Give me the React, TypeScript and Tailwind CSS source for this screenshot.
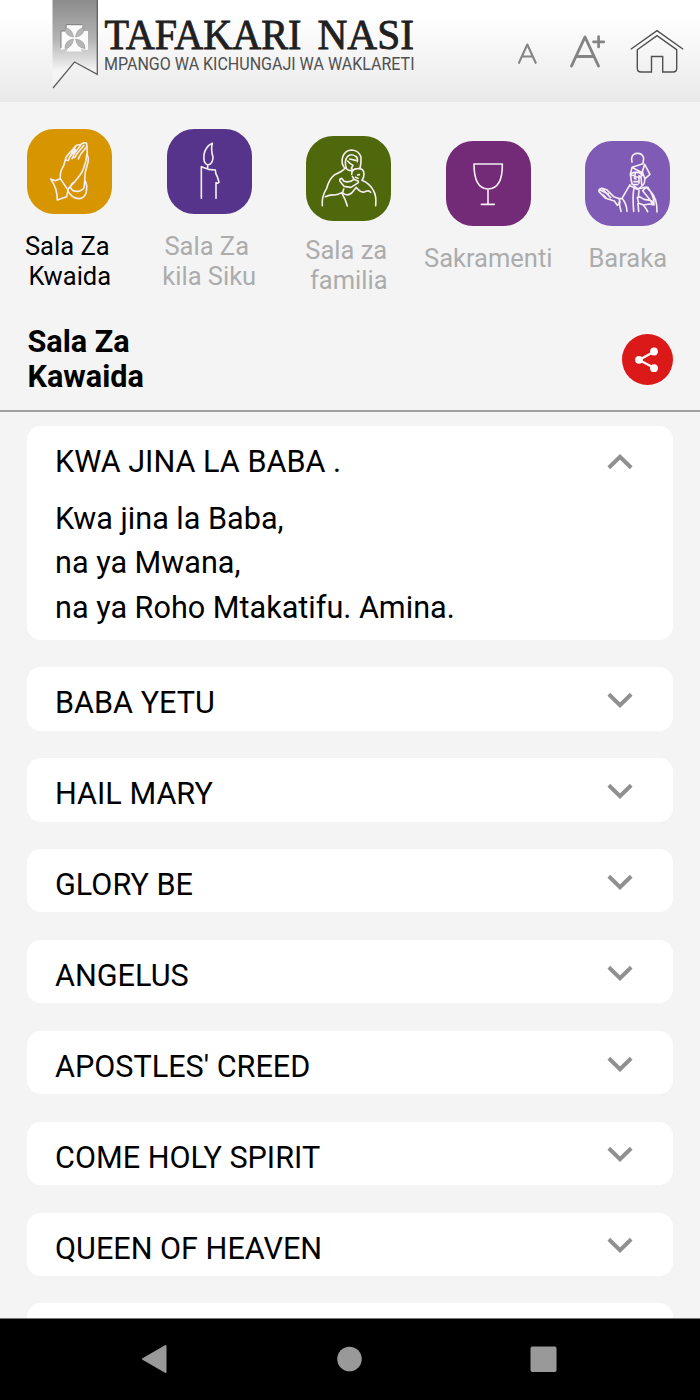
import { useState } from 'react';
import type { ReactNode } from 'react';

function Logo() {
  return (
    <svg className="h-[102px] w-[490px] shrink-0" viewBox="0 0 490 102" role="img" aria-label="Tafakari Nasi">
      <defs>
        <linearGradient id="ribbon" x1="0" y1="0" x2="0" y2="1">
          <stop offset="0" stopColor="#8c8c8c" />
          <stop offset="0.45" stopColor="#b4b4b4" />
          <stop offset="0.8" stopColor="#f4f4f4" />
        </linearGradient>
      </defs>
      <path d="M52.500 0H97.500V74L74.500 62L52.500 88Z" fill="url(#ribbon)" />
      <path d="M97.300 0V74.300L74.500 62L53 88" fill="none" stroke="#606060" strokeWidth="1.300" />
      <g>
        <path d="M66 25H82.500L81 31L88 31V50L81 49L82 51.500H66.500L68 48L61 50V31L67 31Z" fill="#fafafa" />
        <path d="M66 28V24.700H82.500M61 48V31H65" fill="none" stroke="#808080" strokeWidth="1" />
        <g fill="#b6b6b6" stroke="#8c8c8c" strokeWidth="0.500">
          <path d="M65 28Q72 28 73.500 37Q65 36 65 28Z" />
          <path d="M84 28Q77 28 75.500 37Q84 36 84 28Z" />
          <path d="M65 48.500Q65 40 73.500 39Q72 48 65 48.500Z" />
          <path d="M85 48.500Q85 40 75.500 39Q77 48 85 48.500Z" />
        </g>
      </g>
      <g fontSize="42.500" fill="#202020" stroke="#202020" strokeWidth="0.800" className="font-['Liberation_Serif',serif]">
        <text x="104.500" y="49.200" textLength="197" lengthAdjust="spacingAndGlyphs">TAFAKARI</text>
        <text x="317.500" y="49.200" textLength="96.500" lengthAdjust="spacingAndGlyphs">NASI</text>
      </g>
      <text x="104" y="69.800" fontSize="19" textLength="310.500" lengthAdjust="spacingAndGlyphs" fill="#505050" className="font-['Roboto',sans-serif]">MPANGO WA KICHUNGAJI WA WAKLARETI</text>
    </svg>
  );
}

function HeaderActions() {
  return (
    <svg className="h-[102px] w-[200px] shrink-0" viewBox="500 0 200 102" fill="none" strokeLinecap="round" strokeLinejoin="round">
      <path d="M519 62.800L527.300 44.500L535.700 62.800M521.800 56.500H532.800" stroke="#848484" strokeWidth="2.100" />
      <path d="M571.500 66L585 37L598.500 66M576 56.500H594" stroke="#848484" strokeWidth="2.900" />
      <path d="M593.500 41.800H603.800M598.600 36.700V47" stroke="#848484" strokeWidth="2.700" />
      <g stroke="#505050" strokeWidth="1.400" strokeLinecap="butt" strokeLinejoin="miter">
        <path d="M630.800 49.200L657 30.600L683.200 49.200" />
        <path d="M637.300 49.700L657 35.700L676.700 49.700V68.500Q676.700 72 673 72H662.700V56.500H651.500V72H641Q637.300 72 637.300 68.500Z" />
      </g>
    </svg>
  );
}

type Tab = { id: string; lines: string[]; tile: string; box: string; label: string; pad: string; art: ReactNode };

const tabs: Tab[] = [
  {
    id: 'kwaida', lines: ['Sala Za', 'Kwaida'], tile: 'bg-[#d79500]', box: '36 28 255 255', label: 'mt-[17px]', pad: 'pt-[27.4px]',
    art: (
      <>
        <path d="M107 178L121 183L136 177C134 161 139 149 146 138L153 113C160 101 170 95 182 79C185 73 194 76 197 75C202 70 212 67 215 72L216 88L217 103Q213 109 213 123L205 148Q201 161 179 186L160 207L155 231L127 241C127 218 118 193 107 178Z" />
        <path d="M136 177L156 207M154 121Q162 125 162 116L182 79M162 115L181 90M171 117Q176 111 177 103L197 77M178 114Q182 111 186 102L207 77M190 118Q192 112 197 104L216 80M215 104Q222 113 219 127L211 157L209 181Q219 196 213 221Q205 238 190 237Q170 235 158 213M178 188Q169 191 166 204Q173 217 190 215Q201 213 207 205L209 184" />
      </>
    ),
  },
  {
    id: 'siku', lines: ['Sala Za', 'kila Siku'], tile: 'bg-[#57348b]', box: '36 28 255 255', label: 'mt-[17px]', pad: 'pt-[27.4px]',
    art: <path d="M172 71Q151 81 147 105Q144 132 158 136Q174 133 174 111Q167 92 172 71ZM158 136V147M139 236V141L160 149L181 151Q181 163 187 171L192 188Q188 193 183 189V236" />,
  },
  {
    id: 'familia', lines: ['Sala za', 'familia'], tile: 'bg-[#4f680b]', box: '34 48 255 255', label: 'mt-[14px]', pad: 'pt-[34.3px]',
    art: (
      <>
        <path d="M83 257Q80 230 96 205Q103 178 120 164Q143 155 151 145Q138 132 144 111Q151 91 171 90Q193 91 199 112Q200 131 196 145M155 145Q148 122 158 110Q169 99 183 109Q190 113 188 125M165 117L183 121M159 123L166 130L175 136L170 145L175 150M154 143Q157 151 171 152M171 163Q171 147 188 146Q208 144 208 162Q208 173 202 181Q226 191 237 213Q246 229 243 257" />
        <path d="M173 169L178 178L191 184M182 172L190 175M189 165L194 164M178 178Q165 189 148 184L141 175Q133 176 136 184L148 199L169 202L191 188M92 230Q107 223 120 225Q130 223 141 218L151 238L158 258M147 207L144 218M145 219Q157 230 171 219L185 202M185 203L194 212Q205 220 213 214Q224 210 228 217" />
      </>
    ),
  },
  {
    id: 'sakramenti', lines: ['Sakramenti'], tile: 'bg-[#742b77]', box: '78 64 255 255', label: 'mt-[17px]', pad: 'pt-[39.4px]',
    art: <path d="M162 133H247Q248 207 204 208Q162 207 162 133ZM204 208V254M184 254H223" />,
  },
  {
    id: 'baraka', lines: ['Baraka'], tile: 'bg-[#7f5bb5]', box: '46 64 255 255', label: 'mt-[17px]', pad: 'pt-[39.4px]',
    art: (
      <>
        <path d="M187 127Q182 108 196 102Q217 97 222 115L220 132L187 143L182 164L187 193L203 207Q218 203 224 190L226 177L241 164L225 134L218 156L225 176M189 144L218 159M182 163Q202 150 220 167M184 167H192M198 172H207M197 162L194 176L199 178M193 186H205M208 174L219 165M208 168V191M214 170L216 195M184 181L188 194L204 195" />
        <path d="M181 195L157 236L148 237L151 247M181 198L203 209L229 202L243 216Q263 237 262 277M231 202L219 213L242 242L248 253M193 206Q188 225 192 275M208 213L206 233M157 236Q171 252 172 275M148 248L154 275M150 237L132 231L111 210L97 206Q86 207 88 216L108 236L134 244L143 257L151 250M91 211L116 223M100 210L123 234M99 225L109 234M203 234L211 232L223 239L241 242Q253 244 253 256L239 253L222 256L207 251ZM205 252L207 275M221 257Q228 262 234 276M235 203Q253 231 253 250" />
      </>
    ),
  },
];

function TabButton({ tab, active, onSelect }: { tab: Tab; active: boolean; onSelect: () => void }) {
  return (
    <button onClick={onSelect} className={`flex h-full w-[139.5px] shrink-0 flex-col items-center ${tab.pad}`}>
      <span className={`block size-[85px] shrink-0 overflow-hidden rounded-[27px] ${tab.tile}`}>
        <svg className="size-full" viewBox={tab.box} fill="none" stroke="#f4edf2" strokeWidth="4.900" strokeLinecap="round" strokeLinejoin="round">{tab.art}</svg>
      </span>
      <span className={`block text-center text-[25.5px] leading-[30px] whitespace-pre ${tab.label} ${active ? 'text-black' : 'text-[#acacac]'}`}>
        {tab.lines.map((line, i) => (
          <span key={line} className={`block ${tab.lines.length > 1 && i === 0 ? 'pr-[5px]' : ''}`}>{line}</span>
        ))}
      </span>
    </button>
  );
}

function Chevron({ up }: { up?: boolean }) {
  return (
    <svg className={`h-[16px] w-[26px] shrink-0 ${up ? '' : 'mt-[2px] rotate-180'}`} viewBox="0 0 26 16" fill="none" stroke="#909090" strokeWidth="4">
      <path d="M1.800 13.800L13 2.900L24.200 13.800" />
    </svg>
  );
}

const prayers = ['BABA YETU', 'HAIL MARY', 'GLORY BE', 'ANGELUS', "APOSTLES' CREED", 'COME HOLY SPIRIT', 'QUEEN OF HEAVEN', ''];

export default function App() {
  const [active, setActive] = useState('kwaida');
  return (
    <div className="flex h-[1400px] w-[700px] flex-col overflow-hidden bg-[#f4f4f4] font-['Roboto',sans-serif] text-black">
      <header className="flex h-[102px] shrink-0 justify-between bg-linear-to-b from-white from-15% to-[#e9e9e9]">
        <Logo />
        <HeaderActions />
      </header>
      <nav className="flex h-[203px] shrink-0">
        {tabs.map((tab) => <TabButton key={tab.id} tab={tab} active={tab.id === active} onSelect={() => setActive(tab.id)} />)}
      </nav>
      <section className="flex h-[107px] shrink-0 items-start justify-between border-b-2 border-[#a0a0a0] px-[27px]">
        <h1 className="pt-[19px] pl-[0.5px] text-[30.6px] leading-[35px] font-bold">Sala Za<br />Kawaida</h1>
        <button aria-label="Share" className="mt-[29px] flex size-[51px] items-center justify-center rounded-full bg-[#dc1919]">
          <svg className="size-[51px]" viewBox="0 0 51 51" fill="#fff" stroke="#fff" strokeWidth="2.300">
            <path d="M32.500 17.500L17 26L32.500 34" fill="none" />
            <g stroke="none"><circle cx="17" cy="25.800" r="3.900" /><circle cx="32" cy="17.500" r="3.900" /><circle cx="32" cy="34.200" r="3.900" /></g>
          </svg>
        </button>
      </section>
      <main className="flex h-[906px] shrink-0 flex-col gap-[27.4px] overflow-hidden px-[27px] pt-[14px]">
        <article className="h-[213.8px] w-[645.5px] shrink-0 rounded-[14px] bg-white pr-[40px] pl-[28px]">
          <div className="flex h-[71px] items-center justify-between">
            <h2 className="text-[30.6px] leading-[36px]">KWA JINA LA BABA .</h2>
            <Chevron up />
          </div>
          <p className="text-[30.6px] leading-[44.3px]">Kwa jina la Baba,<br />na ya Mwana,<br />na ya Roho Mtakatifu. Amina.</p>
        </article>
        {prayers.map((name) => (
          <article key={name} className="flex h-[63.5px] w-[645.5px] shrink-0 items-center justify-between rounded-[14px] bg-white pr-[40px] pl-[28px]">
            <h2 className="pt-[8.6px] text-[30.6px] leading-[36px]">{name}</h2>
            <Chevron />
          </article>
        ))}
      </main>
      <footer className="h-[82px] shrink-0 border-t border-[#777] bg-black">
        <svg className="h-[81px] w-full" viewBox="0 1319 700 81" fill="#999" stroke="#999" strokeLinejoin="round">
          <path d="M143 1359L165.500 1346V1372Z" strokeWidth="2" />
          <circle cx="349.500" cy="1359" r="12.300" stroke="none" />
          <rect x="531" y="1347" width="25" height="24.500" rx="1" strokeWidth="1" />
        </svg>
      </footer>
    </div>
  );
}
